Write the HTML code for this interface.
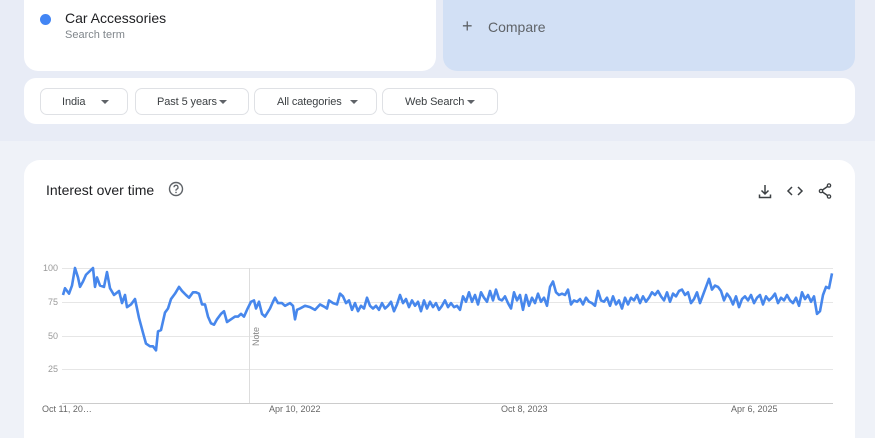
<!DOCTYPE html>
<html style="width:875px;height:438px;overflow:hidden"><head><meta charset="utf-8"><style>
*{margin:0;padding:0;box-sizing:border-box}
body{width:875px;height:438px;overflow:hidden;background:#eff2f8;font-family:"Liberation Sans",Arial,sans-serif;position:relative}
.band{position:absolute;left:0;top:0;width:875px;height:141px;background:#e8ecf6}
.card{position:absolute;background:#fff}
.term{left:24px;top:-20px;width:412px;height:91px;border-radius:0 0 14px 14px}
.dot{position:absolute;left:40px;top:14px;width:11px;height:11px;border-radius:50%;background:#4285f4}
.cmp{position:absolute;left:443px;top:-20px;width:412px;height:91px;border-radius:0 0 14px 14px;background:#d2e0f5}
.filters{left:24px;top:78px;width:831px;height:46px;border-radius:12px}
.fb{position:absolute;top:88px;height:27px;border:1px solid #dfe1e5;border-radius:7px;font-size:11px;color:#3c4043;line-height:26px;letter-spacing:-0.1px}
.fb span{position:absolute;top:11px;border-left:4px solid transparent;border-right:4px solid transparent;border-top:4px solid #5f6368}
.chart{left:24px;top:160px;width:831px;height:278px;border-radius:16px 16px 0 0}
.gl{position:absolute;left:62px;width:771px;height:1px;background:#e6e6e6}
.yl{position:absolute;left:30px;width:28px;text-align:right;font-size:9px;color:#999}
.xl{position:absolute;top:404px;font-size:9px;color:#666}
</style></head><body>
<div class="band"></div>
<div class="card term"></div>
<div class="dot"></div>
<div style="position:absolute;left:65px;top:10px;font-size:14px;color:#202124">Car Accessories</div>
<div style="position:absolute;left:65px;top:29px;font-size:11px;color:#80868b">Search term</div>
<div class="cmp"></div>
<div style="position:absolute;left:462px;top:16px;font-size:18px;color:#5f6368;font-weight:300">+</div>
<div style="position:absolute;left:488px;top:19px;font-size:14px;color:#5f6368">Compare</div>
<div class="card filters"></div>
<div class="fb" style="left:40px;width:88px;padding-left:21px">India<span style="left:60px"></span></div>
<div class="fb" style="left:135px;width:114px;padding-left:21px">Past 5 years<span style="left:83px"></span></div>
<div class="fb" style="left:254px;width:123px;padding-left:22px">All categories<span style="left:95px"></span></div>
<div class="fb" style="left:382px;width:116px;padding-left:22px">Web Search<span style="left:84px"></span></div>
<div class="card chart"></div>
<div style="position:absolute;left:46px;top:182px;font-size:14px;color:#202124">Interest over time</div>
<svg style="position:absolute;left:168px;top:181px" width="16" height="16" viewBox="0 0 16 16"><circle cx="8" cy="8" r="6.5" fill="none" stroke="#5f6368" stroke-width="1.4"/><path d="M6 6.3a2 2 0 1 1 2.6 1.9c-.5.2-.6.5-.6 1v.5" fill="none" stroke="#5f6368" stroke-width="1.3"/><circle cx="8" cy="11.4" r=".8" fill="#5f6368"/></svg>
<svg style="position:absolute;left:757px;top:182px" width="80" height="18" viewBox="0 0 80 18"><g fill="none" stroke="#3c4043" stroke-width="1.5"><path d="M8 3v9M4.5 8.5l3.5 3.5L11.5 8.5M2.5 12.5v3h11v-3"/><path d="M35 5l-4 4 4 4M41 5l4 4-4 4"/><path d="M72 3.5l-8 5.5 8 5.5"/></g><g fill="#3c4043"><circle cx="72" cy="3.5" r="2.3"/><circle cx="64" cy="9" r="2.3"/><circle cx="72" cy="14.5" r="2.3"/></g><g fill="#fff"><circle cx="72" cy="3.5" r="1"/><circle cx="64" cy="9" r="1"/><circle cx="72" cy="14.5" r="1"/></g></svg>
<div class="gl" style="top:268px"></div><div class="gl" style="top:302px"></div><div class="gl" style="top:336px"></div><div class="gl" style="top:369px"></div>
<div class="gl" style="top:403px;background:#ccc"></div>
<div style="position:absolute;left:249px;top:268px;width:1px;height:135px;background:#ddd"></div>
<div style="position:absolute;left:251px;top:346px;font-size:9px;color:#888;transform:rotate(-90deg);transform-origin:left top">Note</div>
<div class="yl" style="top:263px">100</div><div class="yl" style="top:297px">75</div><div class="yl" style="top:331px">50</div><div class="yl" style="top:364px">25</div>
<div class="xl" style="left:42px">Oct 11, 20…</div><div class="xl" style="left:269px">Apr 10, 2022</div><div class="xl" style="left:501px">Oct 8, 2023</div><div class="xl" style="left:731px">Apr 6, 2025</div>
<svg style="position:absolute;left:0;top:0" width="875" height="438"><g transform="translate(0,403) scale(1,-1.35)"><polyline vector-effect="non-scaling-stroke" fill="none" stroke="#4787ec" stroke-width="2.6" stroke-linejoin="round" points="63,80 65,85 69,81 72,87 75,100 78,93 80,86 83,90 86,95 93,100 95,86 97,93 100,87 104,86 107,97 110,85 114,80 119,83 122,74 125,80 127,71 131,73 135,77 139,63 143,52 146,44 150,42 153,42 156,39 158,53 161,54 165,67 168,70 171,77 175,81 179,86 182,83 186,80 189,78 193,82 196,82 199,81 202,73 205,73 208,64 211,59 214,58 217,62 221,66 224,68 227,60 231,62 235,64 238,64 241,66 244,64 247,69 251,75 254,76 256,70 259,75 262,66 265,64 270,70 273,75 275,78 278,74 282,74 285,72 290,74 293,72 295,62 297,69 300,70 305,72 310,71 315,69 320,73 325,71 327,70 329,76 333,74 337,73 340,81 343,79 346,74 349,76 352,69 355,74 358,68 361,72 364,70 367,78 370,72 373,70 376,72 379,69 382,74 385,70 388,72 391,75 394,68 397,73 400,80 403,74 406,77 409,71 412,76 415,72 418,75 421,68 424,76 427,70 430,75 433,71 436,74 439,69 442,72 445,76 448,71 451,74 454,71 457,72 460,69 463,79 466,75 469,82 472,75 475,80 478,73 481,82 484,78 487,75 490,83 493,76 496,84 499,77 502,76 505,79 508,74 511,70 514,82 517,76 520,80 523,69 526,80 529,72 532,78 535,74 538,81 541,75 544,78 547,72 550,86 553,90 556,82 559,80 562,81 565,80 568,84 571,73 574,76 577,75 580,77 583,73 586,78 589,75 592,74 595,72 598,83 601,76 604,75 607,78 610,72 613,79 616,73 619,76 622,70 625,78 628,73 631,78 634,76 637,80 640,74 643,79 646,75 649,78 652,82 655,80 658,83 661,79 664,76 667,82 670,75 673,81 676,79 679,83 682,84 685,80 688,82 691,74 694,77 697,82 700,74 703,80 706,86 709,92 712,84 715,87 718,86 721,83 724,76 727,81 730,78 733,73 736,79 739,71 742,77 745,79 748,76 751,80 754,74 757,78 760,80 763,73 766,79 769,76 772,78 775,81 778,74 781,78 784,76 787,80 790,76 793,74 796,78 799,72 802,82 805,77 808,80 811,75 814,79 817,66 820,68 823,80 826,86 829,85 832,96"/></g></svg>
</body></html>
